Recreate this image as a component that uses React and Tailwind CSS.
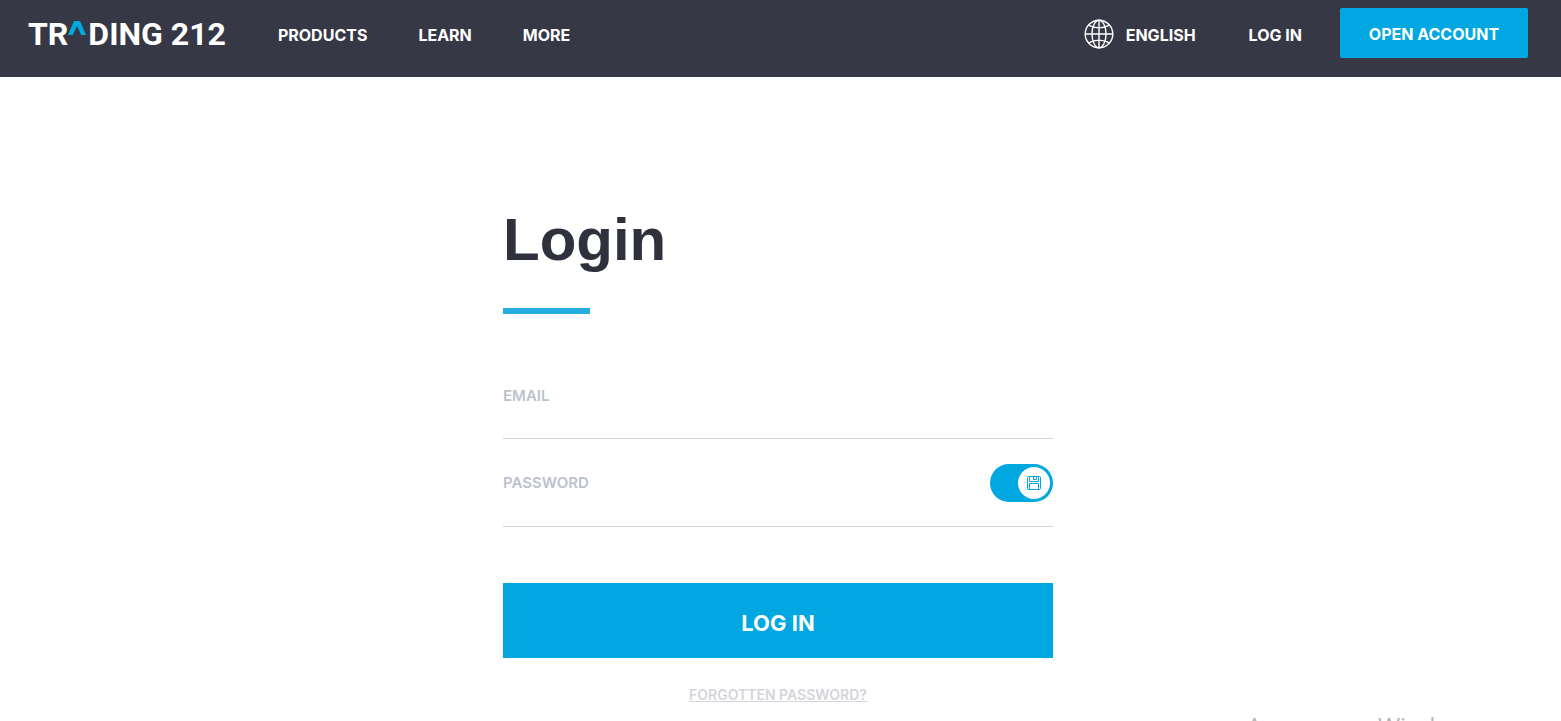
import { useState } from "react";

function Logo() {
  return (
    <a href="#" aria-label="Trading 212" className="flex h-8 items-center font-['Roboto',sans-serif] text-[32px] leading-8 font-bold text-white">
      <span>TR</span>
      <svg viewBox="0 0 18 24" className="mr-0.5 mb-0.5 h-6 w-[18px]" aria-hidden="true">
        <path d="M0 14 6 0h6L18 14h-4.8L9 5 4.8 14Z" fill="#00a7e1" />
      </svg>
      <span>DING 212</span>
    </a>
  );
}

function Globe() {
  return (
    <svg viewBox="0 0 30 30" className="size-[30px]" fill="none" stroke="currentColor" strokeWidth="1.4" aria-hidden="true">
      <circle cx="15" cy="15" r="13.8" />
      <ellipse cx="15" cy="15" rx="7" ry="13.8" />
      <path d="M15 1v28M1 15h28M4.5 6.2Q15 11.5 25.5 6.2M4.5 23.8Q15 18.5 25.5 23.8" />
    </svg>
  );
}

function Floppy() {
  return (
    <svg viewBox="0 0 14 14" className="size-3.5" fill="none" stroke="#00a7e1" aria-hidden="true">
      <path d="M.5 1.5a1 1 0 0 1 1-1h11a1 1 0 0 1 1 1v11a1 1 0 0 1-1 1h-11a1 1 0 0 1-1-1ZM2.5.5v5h9v-5M6.5.5v3h3v-3M2.5 13.5v-6h9v6" />
    </svg>
  );
}

export default function App() {
  const [save, setSave] = useState(true);
  return (
    <div className="relative h-screen overflow-hidden bg-white font-['Inter','Liberation_Sans',sans-serif] font-semibold">
      <header className="flex h-[77px] items-start bg-[#373845] pr-[33px] pl-7 text-base leading-6 font-bold text-white">
        <div className="flex flex-1 items-center pt-[18px]">
          <Logo />
          <nav className="ml-[52px] flex items-center gap-[51px] pt-0.5">
            <a href="#">PRODUCTS</a>
            <a href="#">LEARN</a>
            <a href="#">MORE</a>
          </nav>
        </div>
        <div className="flex items-center gap-[53px] pt-[19px]">
          <button type="button" className="flex items-center gap-3">
            <Globe />
            <span className="pt-0.5">ENGLISH</span>
          </button>
          <a href="#" className="pt-0.5">LOG IN</a>
        </div>
        <a href="#" className="mt-2 ml-[38px] flex h-[50px] w-[188px] items-center justify-center rounded-xs bg-[#00a7e1] pt-0.5">
          OPEN ACCOUNT
        </a>
      </header>

      <div className="pr-[5px]">
        <main className="mx-auto max-w-[550px] pt-[128px]">
          <h1 className="font-['Liberation_Sans',sans-serif] text-[60px] leading-[70px] font-bold text-[#2f313c]">Login</h1>
          <div className="mt-[33px] h-1.5 w-[87px] bg-[#26aee0]" />
          <form className="mt-[38px]" onSubmit={(e) => e.preventDefault()}>
            <div className="flex h-[87px] items-center border-b border-[#cfd1d8]">
              <label htmlFor="email" className="pt-0.5 text-[15px] text-[#bcc2cd]">EMAIL</label>
              <input id="email" type="email" className="h-10 min-w-0 flex-1 px-3 outline-none" />
            </div>
            <div className="flex h-[88px] items-center border-b border-[#cfd1d8]">
              <label htmlFor="password" className="pt-0.5 text-[15px] text-[#bcc2cd]">PASSWORD</label>
              <input id="password" type="password" className="h-10 min-w-0 flex-1 px-3 outline-none" />
              <button
                type="button"
                role="switch"
                aria-checked={save}
                aria-label="Save password"
                onClick={() => setSave(!save)}
                className={`flex h-[38px] w-[63px] items-center rounded-full p-[3px] ${save ? "justify-end bg-[#00a7e1]" : "justify-start bg-[#bcc2cd]"}`}
              >
                <span className="flex size-8 items-center justify-center rounded-full bg-white">
                  <Floppy />
                </span>
              </button>
            </div>
            <button type="submit" className="mt-14 flex h-[75px] w-full items-center justify-center bg-[#00a7e1] pt-1.5 text-[22px] font-bold text-white">
              LOG IN
            </button>
          </form>
          <div className="mt-6 text-center">
            <a href="#" className="text-sm text-[#d3d5da] underline">FORGOTTEN PASSWORD?</a>
          </div>
        </main>
      </div>

      <div className="absolute top-[712px] right-[81px] font-['Open_Sans',sans-serif] text-2xl leading-7 font-normal whitespace-nowrap text-[#b5b5b5]">
        Активация Windows
      </div>
    </div>
  );
}
